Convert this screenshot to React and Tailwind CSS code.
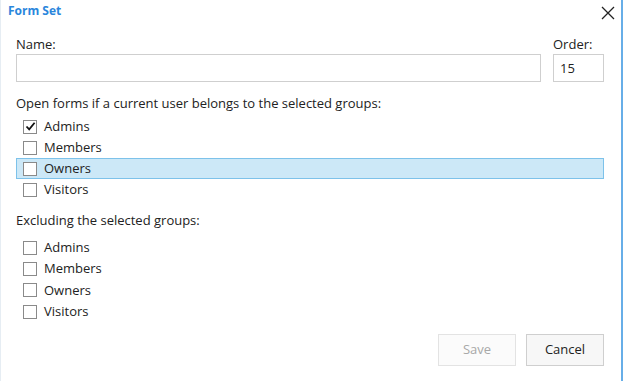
import React, { useState } from "react";

const groups = ["Admins", "Members", "Owners", "Visitors"];

function CheckRow({ label, checked, highlighted, onToggle }) {
  return (
    <div
      onClick={onToggle}
      className={
        "flex items-center h-[21px] pl-[6px] border " +
        (highlighted
          ? "bg-[#cce8f7] border-[#7dc2ea]"
          : "border-transparent")
      }
    >
      <span className="w-[14px] h-[14px] border border-[#8a8a8a] bg-white flex items-center justify-center">
        {checked && (
          <svg width="11" height="11" viewBox="0 0 11 11">
            <path d="M1.5 5.5 L4.2 8.4 L9.6 1.8" fill="none" stroke="#111" strokeWidth="1.8" />
          </svg>
        )}
      </span>
      <span className="ml-[7px] text-[13px] text-[#222]">{label}</span>
    </div>
  );
}

export default function App() {
  const [included, setIncluded] = useState(["Admins"]);
  const [excluded, setExcluded] = useState([]);

  const toggle = (list, setList, name) => {
    setList(list.includes(name) ? list.filter((g) => g !== name) : [...list, name]);
  };

  return (
    <div
      className="w-[624px] h-[381px] bg-white overflow-hidden"
      style={{ fontFamily: '"Open Sans", "Noto Sans", sans-serif' }}
    >
      <div className="w-[623px] h-[381px] border-l border-[#e6edf3] border-r-2 border-r-[#67aee8] flex flex-col">
        {/* Header */}
        <div className="flex items-center justify-between h-[22px] pl-[7px] pr-[6px]">
          <span className="text-[12px] font-bold text-[#2a86dc]">Form Set</span>
          <svg width="14" height="14" viewBox="0 0 14 14" className="mt-[4px]">
            <path d="M1 1 L13 13 M13 1 L1 13" stroke="#222" strokeWidth="1.3" />
          </svg>
        </div>

        <div className="flex flex-col pl-[15px] pr-[17px] pt-[13px]">
          {/* Name / Order */}
          <div className="flex gap-[12px]">
            <div className="flex flex-col flex-1">
              <label className="text-[13px] text-[#222] leading-[19px]">Name:</label>
              <input className="h-[28px] border border-[#cfcfcf] outline-none px-2 text-[13px]" />
            </div>
            <div className="flex flex-col w-[51px]">
              <label className="text-[13px] text-[#222] leading-[19px]">Order:</label>
              <input
                defaultValue="15"
                className="h-[28px] w-[51px] border border-[#cfcfcf] outline-none px-[6px] text-[13px] text-[#222]"
              />
            </div>
          </div>

          <div className="text-[13px] text-[#222] mt-[12px] leading-[19px]">
            Open forms if a current user belongs to the selected groups:
          </div>
          <div className="flex flex-col mt-[3px]">
            {groups.map((g) => (
              <CheckRow
                key={g}
                label={g}
                checked={included.includes(g)}
                highlighted={g === "Owners"}
                onToggle={() => toggle(included, setIncluded, g)}
              />
            ))}
          </div>

          <div className="text-[13px] text-[#222] mt-[11px] leading-[19px]">
            Excluding the selected groups:
          </div>
          <div className="flex flex-col gap-[0.4px] mt-[7px]">
            {groups.map((g) => (
              <CheckRow
                key={g}
                label={g}
                checked={excluded.includes(g)}
                onToggle={() => toggle(excluded, setExcluded, g)}
              />
            ))}
          </div>

          {/* Buttons */}
          <div className="flex justify-end gap-[10px] mt-[12px]">
            <button className="w-[78px] h-[32px] border border-[#e3e3e3] bg-[#fbfbfb] text-[13px] text-[#a8a8a8]">
              Save
            </button>
            <button className="w-[78px] h-[32px] border border-[#cfcfcf] bg-[#f7f7f7] text-[13px] text-[#222]">
              Cancel
            </button>
          </div>
        </div>
      </div>
    </div>
  );
}
